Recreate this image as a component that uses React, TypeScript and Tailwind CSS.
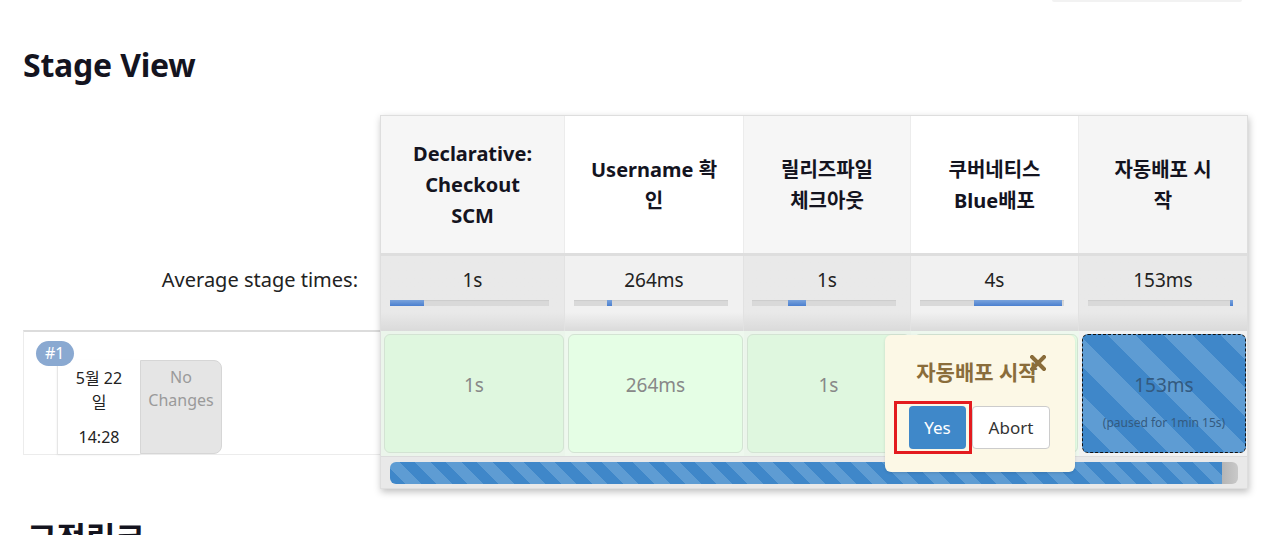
import React from 'react';

const FONT = '"Noto Sans", "Noto Sans CJK KR", sans-serif';

const stages = [
  {
    name: ['Declarative:', 'Checkout', 'SCM'],
    avg: '1s',
    track: [9, 15],
    bar: [0, 34],
    head: 'bg-[#f6f6f6]',
    avgBg: 'from-[#e9e9e9]',
    rowBg: 'bg-[#ebf5eb]',
    cell: 'bg-[#dff7df]',
  },
  {
    name: ['Username 확', '인'],
    avg: '264ms',
    track: [9, 15],
    bar: [33, 5],
    head: 'bg-white',
    avgBg: 'from-[#f1f1f1]',
    rowBg: 'bg-[#eef8ee]',
    cell: 'bg-[#e5fee5]',
  },
  {
    name: ['릴리즈파일', '체크아웃'],
    avg: '1s',
    track: [8, 14],
    bar: [36, 18],
    head: 'bg-[#f6f6f6]',
    avgBg: 'from-[#e9e9e9]',
    rowBg: 'bg-[#ebf5eb]',
    cell: 'bg-[#dff7df]',
  },
  {
    name: ['쿠버네티스', 'Blue배포'],
    avg: '4s',
    track: [9, 14],
    bar: [54, 88],
    head: 'bg-white',
    avgBg: 'from-[#f1f1f1]',
    rowBg: 'bg-[#eef8ee]',
    cell: 'bg-[#e5fee5]',
  },
  {
    name: ['자동배포 시', '작'],
    avg: '153ms',
    track: [9, 15],
    bar: [142, 3],
    head: 'bg-[#f5f5f5]',
    avgBg: 'from-[#e9e9e9]',
    rowBg: 'bg-[#f2f2f2]',
    cell: '',
  },
];

const COLS = 'grid grid-cols-[184px_179px_167px_168px_168px]';

const stripes = (size: number) =>
  `repeating-linear-gradient(45deg, #3f87c9 0px, #3f87c9 ${size}px, #5e9cd3 ${size}px, #5e9cd3 ${size * 2}px)`;

function CloseIcon() {
  return (
    <svg width="16" height="16" viewBox="0 0 16 16" className="text-[#8a6d3b]">
      <path d="M2 2 L14 14 M14 2 L2 14" stroke="currentColor" strokeWidth="4" strokeLinecap="square" />
    </svg>
  );
}

function Popover() {
  return (
    <div className="absolute left-[504px] top-[219px] w-[190px] h-[137px] rounded-md bg-[#fcf8e6] shadow-[0_1px_3px_rgba(0,0,0,0.12)]">
      <div className="flex justify-center pt-[22px] pl-[2px]">
        <span className="text-[21px] leading-[30px] font-bold text-[#8a6d3b]">자동배포 시작</span>
        <span className="-ml-[8px] -mt-[2px]">
          <CloseIcon />
        </span>
      </div>
      <div className="flex items-start mt-[14px] pl-[9px]">
        <div className="border-[3px] border-[#e31b1f] pl-[12px] pr-[3px] py-[2px]">
          <div className="w-[57px] h-[43px] rounded bg-[#3f88c9] text-white text-[17px] flex items-center justify-center">
            Yes
          </div>
        </div>
        <div className="mt-[5px] w-[78px] h-[43px] rounded border border-[#ccc] bg-white text-[#333] text-[17px] flex items-center justify-center">
          Abort
        </div>
      </div>
    </div>
  );
}

export default function App() {
  return (
    <div className="w-[1279px] h-[535px] overflow-hidden bg-white text-[#222]" style={{ fontFamily: FONT }}>
      <div className="flex justify-end pr-[37px]">
        <div className="w-[190px] h-[2px] rounded-b-lg bg-[#f2f2f2]" />
      </div>

      <h1 className="mt-[43px] pl-[23px] text-[32px] leading-[40px] font-bold text-[#14141f] tracking-[-0.2px]">Stage View</h1>

      <div className="flex pl-[23px] mt-[30px]">
        {/* labels column */}
        <div className="w-[357px] flex flex-col">
          <div className="h-[138px]" />
          <div className="h-[77px] flex items-start justify-end pr-[22px] pt-[14px] text-[20px] leading-[26px] text-[#222]">
            Average stage times:
          </div>
          <div className="h-[125px] border-t-2 border-b border-l border-t-[#dcdcdc] border-b-[#ececec] border-l-[#ececec] relative">
            <div className="absolute left-[12px] top-[9px] z-10 h-[25px] px-[9px] rounded-full bg-[#8aa9d1] text-white text-[16px] leading-[25px]">
              #1
            </div>
            <div className="flex ml-[33px] mt-[28px]">
              <div className="w-[83px] h-[94px] bg-white border-l border-[#e6e6e6] shadow-[0_1px_2px_rgba(0,0,0,0.08)] text-center text-[16px] leading-[24px] text-[#222] pt-[6px]">
                <div>5월 22</div>
                <div>일</div>
                <div className="mt-[11px]">14:28</div>
              </div>
              <div className="w-[82px] h-[94px] bg-[#e5e5e5] border border-[#d6d6d6] rounded-r-lg text-center text-[16px] leading-[23px] text-[#9a9a9a] pt-[5px]">
                <div>No</div>
                <div>Changes</div>
              </div>
            </div>
          </div>
        </div>

        {/* stage table */}
        <div className="relative w-[868px] border border-[#dedede] shadow-[1px_3px_7px_rgba(0,0,0,0.25)]">
          <div className={COLS}>
            {stages.map((s, i) => (
              <div
                key={i}
                className={`${s.head} h-[137px] flex items-center justify-center text-center text-[20px] leading-[31px] font-bold text-[#14141f] ${i < 4 ? 'border-r border-[#ececec]' : ''}`}
              >
                <div>
                  {s.name.map((l, j) => (
                    <div key={j}>{l}</div>
                  ))}
                </div>
              </div>
            ))}
          </div>

          <div className={`${COLS} border-t-[3px] border-[#dedede]`}>
            {stages.map((s, i) => (
              <div
                key={i}
                className={`h-[75px] bg-linear-to-b ${s.avgBg} from-75% to-[#dadada] ${i < 4 ? 'border-r border-[#e2e2e2]' : ''}`}
              >
                <div className="text-center text-[19px] leading-[26px] text-[#222] pt-[11px]">{s.avg}</div>
                <div className="mt-[7px]" style={{ paddingLeft: s.track[0], paddingRight: s.track[1] }}>
                  <div className="relative h-[6px] bg-[#d9d9d9] shadow-[inset_0_1px_1px_rgba(0,0,0,0.06)]">
                    <div
                      className="absolute top-0 h-[6px] bg-linear-to-b from-[#7aa3dc] to-[#4a7fcf]"
                      style={{ left: s.bar[0], width: s.bar[1] }}
                    />
                  </div>
                </div>
              </div>
            ))}
          </div>

          <div className={COLS}>
            {stages.map((s, i) => (
              <div key={i} className={`${s.rowBg} h-[125px] p-[3px] pr-[1px]`}>
                {i < 4 ? (
                  <div
                    className={`${s.cell} h-full rounded-md border border-[#d3e3d3] flex items-center justify-center text-[19px] text-[#888] pb-[16px]`}
                  >
                    {i === 3 ? '' : s.avg}
                  </div>
                ) : (
                  <div
                    className="h-full rounded-md border border-dashed border-[#111] flex flex-col items-center text-[#335a80] pt-[37px]"
                    style={{ backgroundImage: stripes(20) }}
                  >
                    <div className="text-[19px] leading-[26px]">153ms</div>
                    <div className="text-[12px] leading-[16px] mt-[17px]">(paused for 1min 15s)</div>
                  </div>
                )}
              </div>
            ))}
          </div>

          <div className="h-[32px] bg-[#e9e9e9] border-t border-[#dcdcdc] pt-[5px] px-[9px]">
            <div className="flex h-[22px] rounded-md overflow-hidden">
              <div className="w-[832px] h-full" style={{ backgroundImage: stripes(11) }} />
              <div className="flex-1 h-full bg-linear-to-r from-[#b5b5b5] to-[#c9c9c9]" />
            </div>
          </div>

          <Popover />
        </div>
      </div>

      <h2 className="mt-[29px] pl-[27px] text-[32px] leading-[40px] font-bold text-[#14141f]">고정링크</h2>
    </div>
  );
}
